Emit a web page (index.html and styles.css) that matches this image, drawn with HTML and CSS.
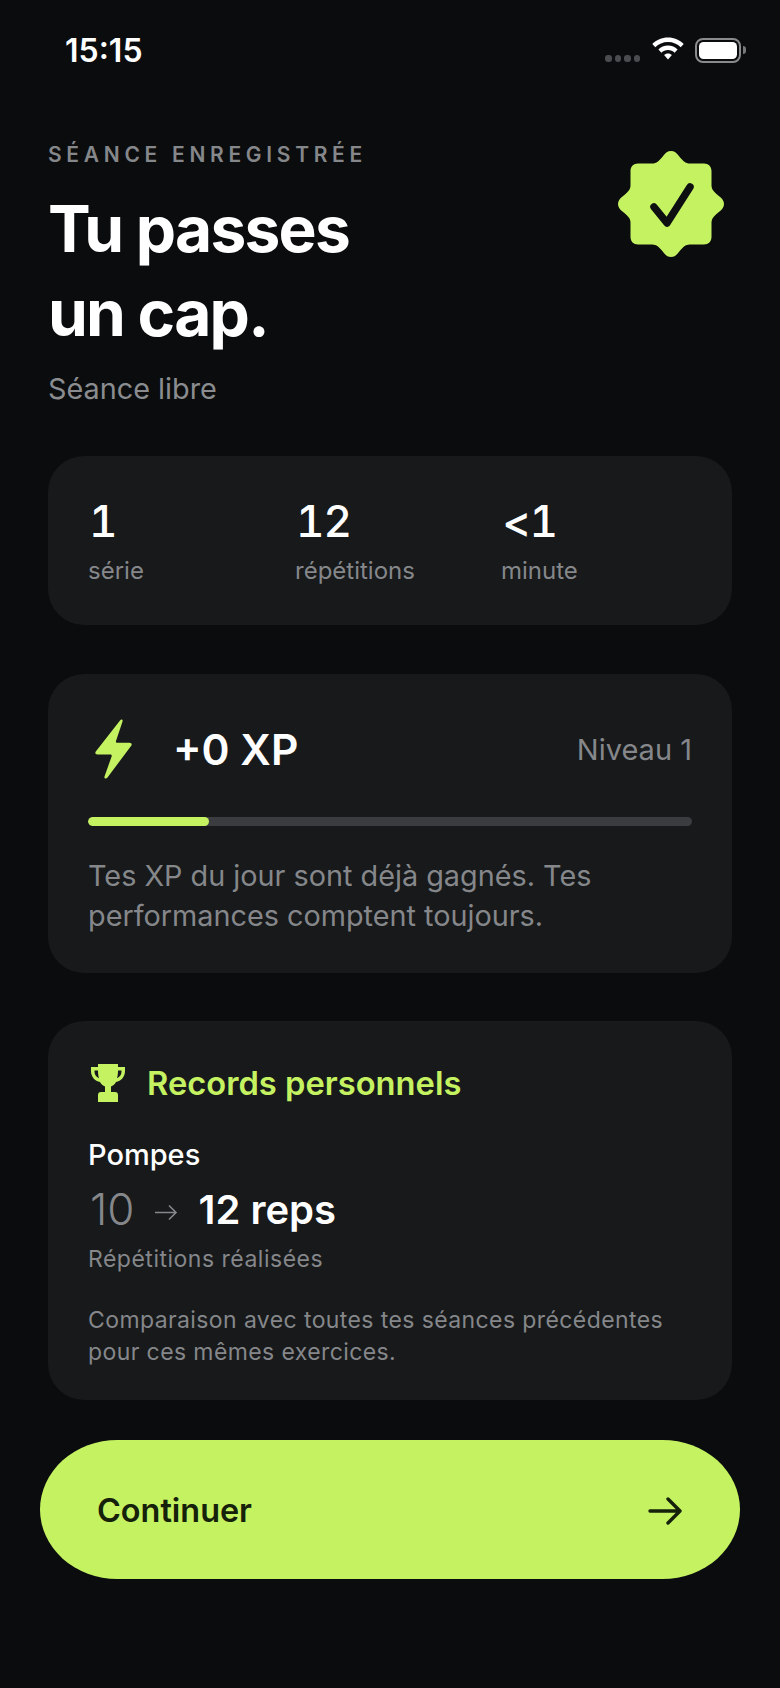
FILE: index.html
```html
<!DOCTYPE html>
<html lang="fr">
<head>
<meta charset="utf-8">
<title>Séance enregistrée</title>
<link rel="stylesheet" href="styles.css">
</head>
<body>
<div class="screen">
  <header class="status">
    <span class="time">15:15</span>
    <div class="status-icons">
      <div class="dots"><i></i><i></i><i></i><i></i></div>
      <svg class="wifi" width="34" height="26" viewBox="0 0 34 26"><path d="M17 1.500C10.800 1.500 5.300 4 1.300 8L4.300 11.300C7.500 8 12 6 17 6C22 6 26.500 8 29.700 11.300L32.700 8C28.700 4 23.200 1.500 17 1.500Z" fill="#fff"/><path d="M17 9.500C13.200 9.500 9.900 11 7.400 13.500L10.400 16.700C12.100 15 14.400 14 17 14C19.600 14 21.900 15 23.600 16.700L26.600 13.500C24.100 11 20.800 9.500 17 9.500Z" fill="#fff"/><path d="M17 17.500C15.400 17.500 14.100 18.100 13.100 19.100L17 23.400L20.900 19.100C19.900 18.100 18.600 17.500 17 17.500Z" fill="#fff"/></svg>
      <div class="battery"><div class="battery-fill"></div></div>
      <div class="battery-cap"></div>
    </div>
  </header>

  <section class="hero">
    <div class="hero-text">
      <p class="eyebrow">SÉANCE ENREGISTRÉE</p>
      <h1>Tu passes<br>un cap.</h1>
      <p class="subtitle">Séance libre</p>
    </div>
    <svg class="badge" width="108" height="108" viewBox="0 0 108 108"><path d="M54 1C57.500 1 59.500 3 61.500 5.500C64 8.500 66 11 68.500 12.500C70.500 13.500 72 13.500 74 13.500H87C91.500 13.500 94.500 16.500 94.500 21V34C94.500 36 94.500 37.500 95.500 39.500C97 42 99.500 44 102.500 46.500C105 48.500 107 50.500 107 54C107 57.500 105 59.500 102.500 61.500C99.500 64 97 66 95.500 68.500C94.500 70.500 94.500 72 94.500 74V87C94.500 91.500 91.500 94.500 87 94.500H74C72 94.500 70.500 94.500 68.500 95.500C66 97 64 99.500 61.500 102.500C59.500 105 57.500 107 54 107C50.500 107 48.500 105 46.500 102.500C44 99.500 42 97 39.500 95.500C37.500 94.500 36 94.500 34 94.500H21C16.500 94.500 13.500 91.500 13.500 87V74C13.500 72 13.500 70.500 12.500 68.500C11 66 8.500 64 5.500 61.500C3 59.500 1 57.500 1 54C1 50.500 3 48.500 5.500 46.500C8.500 44 11 42 12.500 39.500C13.500 37.500 13.500 36 13.500 34V21C13.500 16.500 16.500 13.500 21 13.500H34C36 13.500 37.500 13.500 39.500 12.500C42 11 44 8.500 46.500 5.500C48.500 3 50.500 1 54 1Z" fill="#c5f261"/><path d="M37 57L50 73L73 37" fill="none" stroke="#0d0f11" stroke-width="7.500" stroke-linecap="round" stroke-linejoin="round"/></svg>
  </section>

  <section class="card stats">
    <div class="stat"><div class="stat-value">1</div><div class="stat-label">série</div></div>
    <div class="stat"><div class="stat-value">12</div><div class="stat-label">répétitions</div></div>
    <div class="stat"><div class="stat-value">&lt;1</div><div class="stat-label">minute</div></div>
  </section>

  <section class="card xp">
    <div class="xp-row">
      <svg class="bolt" width="37" height="62" viewBox="0 0 37 62"><path d="M25 2.500C26 .8 28 1.200 27.600 3.200L21 23C20.700 24 21.200 24.800 22.200 24.800H34.500C36.500 24.800 37.300 26.300 36.200 27.700L12.500 59.500C11.200 61.300 8.800 60.700 9.500 58.500L16.600 38.500C17 37.200 16.400 36.500 15.300 36.500H2.500C.5 36.500 -.3 35 .8 33.500Z" fill="#c5f261"/></svg>
      <span class="xp-value">+0 XP</span>
      <span class="level">Niveau 1</span>
    </div>
    <div class="progress"><div class="progress-fill"></div></div>
    <p class="xp-note">Tes XP du jour sont déjà gagnés. Tes performances comptent toujours.</p>
  </section>

  <section class="card records">
    <div class="records-head">
      <svg class="trophy" width="36" height="40" viewBox="0 0 36 40"><path d="M8 1H28V4H35V8C35 14 31 18 26 19C25 21 23 22.500 21 23.500V29H25C27 29 28 30 28 32V39H8V32C8 30 9 29 11 29H15V23.500C13 22.500 11 21 10 19C5 18 1 14 1 8V4H8ZM8 7.500H4.500V8.500C4.500 11.500 6 14 9 15.300C8.300 13 8 10 8 7.500ZM28 7.500C28 10 27.700 13 27 15.300C30 14 31.500 11.500 31.500 8.500V7.500Z" fill="#c5f261"/></svg>
      <h2>Records personnels</h2>
    </div>
    <h3>Pompes</h3>
    <div class="compare">
      <span class="old">10</span>
      <svg class="small-arrow" width="24" height="18" viewBox="0 0 24 18"><path d="M1 9.500H22M15 2.500L22 9.500L15 16.500" fill="none" stroke="#85878a" stroke-width="1.600"/></svg>
      <span class="new">12 reps</span>
    </div>
    <p class="metric">Répétitions réalisées</p>
    <p class="foot">Comparaison avec toutes tes séances précédentes pour ces mêmes exercices.</p>
  </section>

  <button class="cta">
    <span>Continuer</span>
    <svg width="34" height="28" viewBox="0 0 34 28"><path d="M2 14H31M20 2L32 14L20 26" fill="none" stroke="#16210a" stroke-width="3.400" stroke-linecap="round" stroke-linejoin="round"/></svg>
  </button>
</div>
</body>
</html>
```
FILE: styles.css
```css
* { box-sizing: border-box; margin: 0; padding: 0; }
html, body { background: #0a0c0e; }
body { width: 780px; height: 1688px; overflow: hidden; font-family: Inter, "Liberation Sans", sans-serif; color: #fff; }
.screen { display: flex; flex-direction: column; height: 1688px; padding: 0 48px; }

.status { display: flex; justify-content: space-between; align-items: center; height: 50px; margin-top: 25px; margin-left: 17px; margin-right: -14px; }
.time { font-size: 32px; font-weight: 600; }
.status-icons { display: flex; align-items: center; }
.dots { display: flex; gap: 3px; margin-right: 11px; margin-top: 16px; }
.dots i { width: 6.500px; height: 7px; border-radius: 3px; background: #4b4c4f; }
.wifi { margin-right: 10px; margin-top: -2px; }
.battery { width: 46px; height: 25px; border: 2px solid #8a8b8d; border-radius: 8px; padding: 2px; }
.battery-fill { width: 100%; height: 100%; background: #fff; border-radius: 4.500px; }
.battery-cap { width: 3px; height: 8px; margin-left: 2px; background: #77787a; border-radius: 0 3px 3px 0; }

.hero { display: flex; justify-content: space-between; align-items: flex-start; margin-top: 68px; height: 292px; }
.eyebrow { font-size: 21px; line-height: 24px; font-weight: 600; letter-spacing: 4.700px; color: #85878a; }
h1 { margin-top: 20px; font-size: 64px; line-height: 84px; font-weight: 700; letter-spacing: -1.750px; color: #fff; }
.subtitle { margin-top: 16px; font-size: 28.800px; line-height: 36px; color: #8a8c8f; }
.badge { margin-right: 7px; margin-top: 7px; }

.card { background: #17191b; border-radius: 36px; }
.stats { display: grid; grid-template-columns: 207px 206px 1fr; margin-top: 21px; height: 169px; padding: 40px 40px 0; }
.stat-value { font-size: 44px; line-height: 50px; font-weight: 500; margin-left: 1px; letter-spacing: -1px; font-variant-numeric: tabular-nums; }
.stat-label { margin-top: 10px; font-size: 24px; line-height: 30px; color: #85878a; }

.xp { margin-top: 49px; height: 299px; padding: 43px 40px 0; }
.xp-row { display: flex; align-items: center; height: 64px; }
.bolt { margin-left: 7px; }
.xp-value { margin-left: 41px; font-size: 42.500px; font-weight: 580; }
.level { margin-left: auto; font-size: 29px; color: #85878a; }
.progress { margin-top: 36px; height: 9px; border-radius: 4.500px; background: #3a3c40; overflow: hidden; }
.progress-fill { width: 20%; height: 100%; border-radius: 4.500px; background: #c5f261; }
.xp-note { margin-top: 30px; font-size: 28.800px; line-height: 40px; color: #85878a; }

.records { margin-top: 48px; height: 379px; padding: 40px 40px 0; }
.records-head { display: flex; align-items: center; gap: 21px; height: 44px; }
.trophy { margin-left: 2px; }
h2 { font-size: 32.700px; font-weight: 580; color: #c5f261; }
h3 { margin-top: 32px; font-size: 29px; line-height: 36px; font-weight: 550; }
.compare { display: flex; align-items: center; margin-top: 11px; height: 50px; }
.old { font-size: 44px; color: #85878a; font-weight: 300; margin-left: 2px; }
.small-arrow { margin: 6px 21px 0 19px; }
.new { font-size: 40px; font-weight: 580; }
.metric { margin-top: 9px; font-size: 23px; line-height: 32px; color: #85878a; letter-spacing: .5px; }
.foot { margin-top: 30px; font-size: 23px; line-height: 31.500px; color: #85878a; letter-spacing: .4px; }

.cta { display: flex; align-items: center; justify-content: space-between; margin: 40px -8px 0; height: 139px; padding: 2px 58px 0 57px; border: 0; border-radius: 78px / 70px; background: #c5f261; color: #16210a; font-family: inherit; font-size: 32.400px; font-weight: 580; }
```
